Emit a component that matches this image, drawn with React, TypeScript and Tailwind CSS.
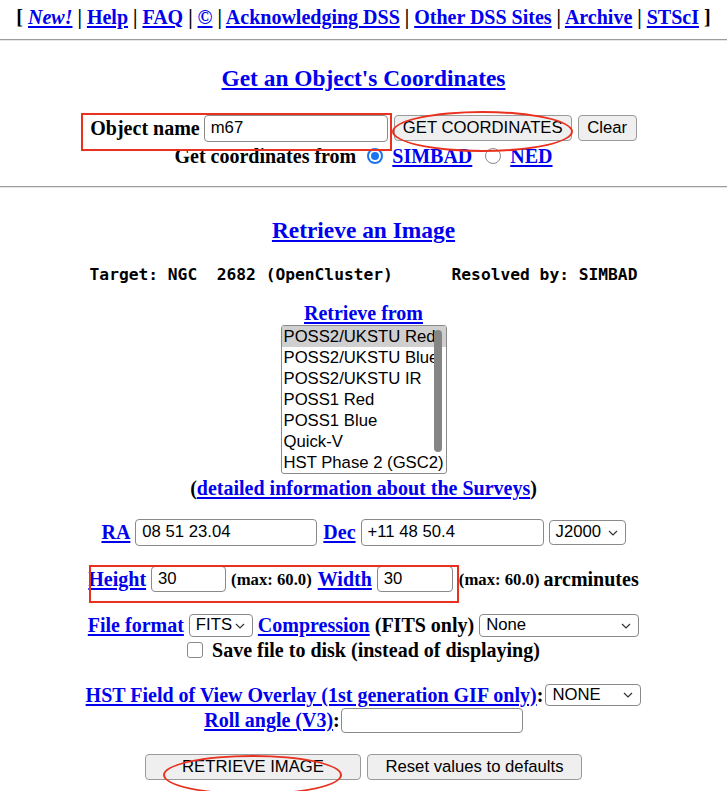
import React from 'react'

const sans = "font-['Liberation_Sans',Arial,sans-serif] font-normal text-[16.7px] text-black"

function A({ children, className = '' }: { children: React.ReactNode; className?: string }) {
  return <a className={`text-[#0000ee] underline decoration-[1.5px] underline-offset-[2px] ${className}`}>{children}</a>
}

function Field({ value = '', w, h = 27 }: { value?: string; w: string; h?: number }) {
  return (
    <div
      className={`${sans} ${w} flex items-center rounded-[4px] border border-[#8a8a8a] bg-white pl-[6px] leading-none`}
      style={{ height: h }}
    >
      {value}
    </div>
  )
}

function Btn({ children, w }: { children: React.ReactNode; w: string }) {
  return (
    <div className={`${sans} ${w} flex h-[26px] items-center justify-center rounded-[4px] border border-[#9a9a9a] bg-[#efefef] leading-none`}>
      {children}
    </div>
  )
}

function Select({ value, w, h = 23 }: { value: string; w: string; h?: number }) {
  return (
    <div
      className={`${sans} ${w} flex items-center justify-between rounded-[4px] border border-[#8a8a8a] bg-white pl-[6px] pr-[7px] leading-none`}
      style={{ height: h }}
    >
      <span>{value}</span>
      <svg width="10" height="6" viewBox="0 0 10 6" fill="none" stroke="#333" strokeWidth="1.2">
        <path d="M1 1l4 4 4-4" />
      </svg>
    </div>
  )
}

function Radio({ checked }: { checked?: boolean }) {
  return checked ? (
    <div className="flex h-[16px] w-[16px] items-center justify-center rounded-full bg-[#1a73f0]">
      <div className="flex h-[12px] w-[12px] items-center justify-center rounded-full bg-white">
        <div className="h-[8px] w-[8px] rounded-full bg-[#1a73f0]" />
      </div>
    </div>
  ) : (
    <div className="h-[16px] w-[16px] rounded-full border border-[#8a8a8a] bg-white" />
  )
}

const surveys = [
  'POSS2/UKSTU Red',
  'POSS2/UKSTU Blue',
  'POSS2/UKSTU IR',
  'POSS1 Red',
  'POSS1 Blue',
  'Quick-V',
  'HST Phase 2 (GSC2)'
]

export default function App() {
  return (
    <div className="relative min-h-[791px] w-full bg-white font-['Liberation_Serif',serif] text-[20px] font-bold leading-[23px] text-black">
      {/* nav */}
      <p className="mt-[5px] h-[24px] text-center leading-[24px]">
        [ <A className="italic">New!</A> | <A>Help</A> | <A>FAQ</A> | <A>©</A> | <A>Acknowledging DSS</A> |{' '}
        <A>Other DSS Sites</A> | <A>Archive</A> | <A>STScI</A> ]
      </p>
      <div className="mt-[10px] h-[2px] border-t border-b border-t-[#9c9c9c] border-b-[#e6e6e6]" />

      <h3 className="mt-[23px] h-[28px] text-center text-[23.4px] leading-[28px]">
        <A>Get an Object's Coordinates</A>
      </h3>

      <div className="mt-[17px] flex h-[38px] items-center justify-center">
        <span>Object name</span>
        <div className="ml-[4px]">
          <Field value="m67" w="w-[184px]" />
        </div>
        <div className="ml-[6px]">
          <Btn w="w-[178px]">GET COORDINATES</Btn>
        </div>
        <div className="ml-[6px]">
          <Btn w="w-[59px]">Clear</Btn>
        </div>
      </div>

      <div className="flex h-[18px] items-center justify-center">
        <span>Get coordinates from</span>
        <div className="ml-[11px]">
          <Radio checked />
        </div>
        <A className="ml-[9px]">SIMBAD</A>
        <div className="ml-[13px]">
          <Radio />
        </div>
        <A className="ml-[9px]">NED</A>
      </div>

      <div className="mt-[21px] h-[2px] border-t border-b border-t-[#9c9c9c] border-b-[#e6e6e6]" />

      <h3 className="mt-[28px] h-[28px] text-center text-[23.4px] leading-[28px]">
        <A>Retrieve an Image</A>
      </h3>

      <pre className="mt-[21px] h-[20px] text-center font-['DejaVu_Sans_Mono',monospace] text-[16.25px] font-bold leading-[20px]">
        {'Target: NGC  2682 (OpenCluster)      Resolved by: SIMBAD'}
      </pre>

      <p className="mt-[16px] h-[24px] text-center leading-[24px]">
        <A>Retrieve from</A>
      </p>

      <div className="flex justify-center">
        <div className="relative h-[149px] w-[166px] overflow-hidden rounded-[3px] border border-[#8a8a8a] bg-white">
          {surveys.map((s, i) => (
            <div
              key={s}
              className={`${sans} h-[21px] whitespace-nowrap pl-[2px] leading-[21px] ${i === 0 ? 'bg-[#cfcfcf]' : ''}`}
            >
              {s}
            </div>
          ))}
          <div className="absolute right-[4px] top-[4px] h-[122px] w-[8px] rounded-full bg-[#858585]" />
        </div>
      </div>

      <p className="mt-[2px] h-[24px] text-center leading-[24px]">
        (<A>detailed information about the Surveys</A>)
      </p>

      <div className="mt-[19px] flex h-[27px] items-center justify-center">
        <A>RA</A>
        <div className="ml-[5px]">
          <Field value="08 51 23.04" w="w-[182px]" />
        </div>
        <A className="ml-[6px]">Dec</A>
        <div className="ml-[5px]">
          <Field value="+11 48 50.4" w="w-[183px]" />
        </div>
        <div className="ml-[5px]">
          <Select value="J2000" w="w-[77px]" h={25} />
        </div>
      </div>

      <div className="mt-[20px] flex h-[26px] items-center justify-center">
        <A>Height</A>
        <div className="ml-[5px]">
          <Field value="30" w="w-[75px]" h={26} />
        </div>
        <span className="ml-[5px] text-[16.7px]">(max: 60.0)</span>
        <A className="ml-[6px]">Width</A>
        <div className="ml-[5px]">
          <Field value="30" w="w-[76px]" h={26} />
        </div>
        <span className="ml-[6px] text-[16.7px]">(max: 60.0)</span>
        <span className="ml-[4px]">arcminutes</span>
      </div>

      <div className="mt-[22px] flex h-[23px] items-center justify-center">
        <A>File format</A>
        <div className="ml-[5px]">
          <Select value="FITS" w="w-[64px]" />
        </div>
        <A className="ml-[5px]">Compression</A>
        <span className="ml-[5px]">(FITS only)</span>
        <div className="ml-[5px]">
          <Select value="None" w="w-[160px]" />
        </div>
      </div>

      <div className="mt-[2px] flex h-[22px] items-center justify-center">
        <div className="h-[16px] w-[16px] rounded-[3px] border border-[#8a8a8a] bg-white" />
        <span className="ml-[9px]">Save file to disk (instead of displaying)</span>
      </div>

      <div className="mt-[23px] flex h-[22px] items-center justify-center">
        <A>HST Field of View Overlay (1st generation GIF only)</A>
        <span>:</span>
        <div className="ml-[2px]">
          <Select value="NONE" w="w-[96px]" h={22} />
        </div>
      </div>

      <div className="mt-[2px] flex h-[25px] items-center justify-center">
        <A>Roll angle (V3)</A>
        <span>:</span>
        <div className="ml-[1px]">
          <Field w="w-[182px]" h={25} />
        </div>
      </div>

      <div className="mt-[21px] flex h-[26px] items-center justify-center gap-[6px]">
        <Btn w="w-[216px]">RETRIEVE IMAGE</Btn>
        <Btn w="w-[215px]">Reset values to defaults</Btn>
      </div>

      {/* annotation overlays */}
      <div className="pointer-events-none absolute left-[81px] top-[108px] h-[38px] w-[311px] border-2 border-[#e8321f]" />
      <div className="pointer-events-none absolute left-[392px] top-[106px] h-[41px] w-[181px] rounded-[50%] border-2 border-[#e8321f]" />
      <div className="pointer-events-none absolute left-[89px] top-[560px] h-[38px] w-[370px] border-2 border-[#e8321f]" />
      <div className="pointer-events-none absolute left-[163px] top-[750px] h-[40px] w-[179px] rounded-[50%] border-2 border-[#e8321f]" />
    </div>
  )
}
